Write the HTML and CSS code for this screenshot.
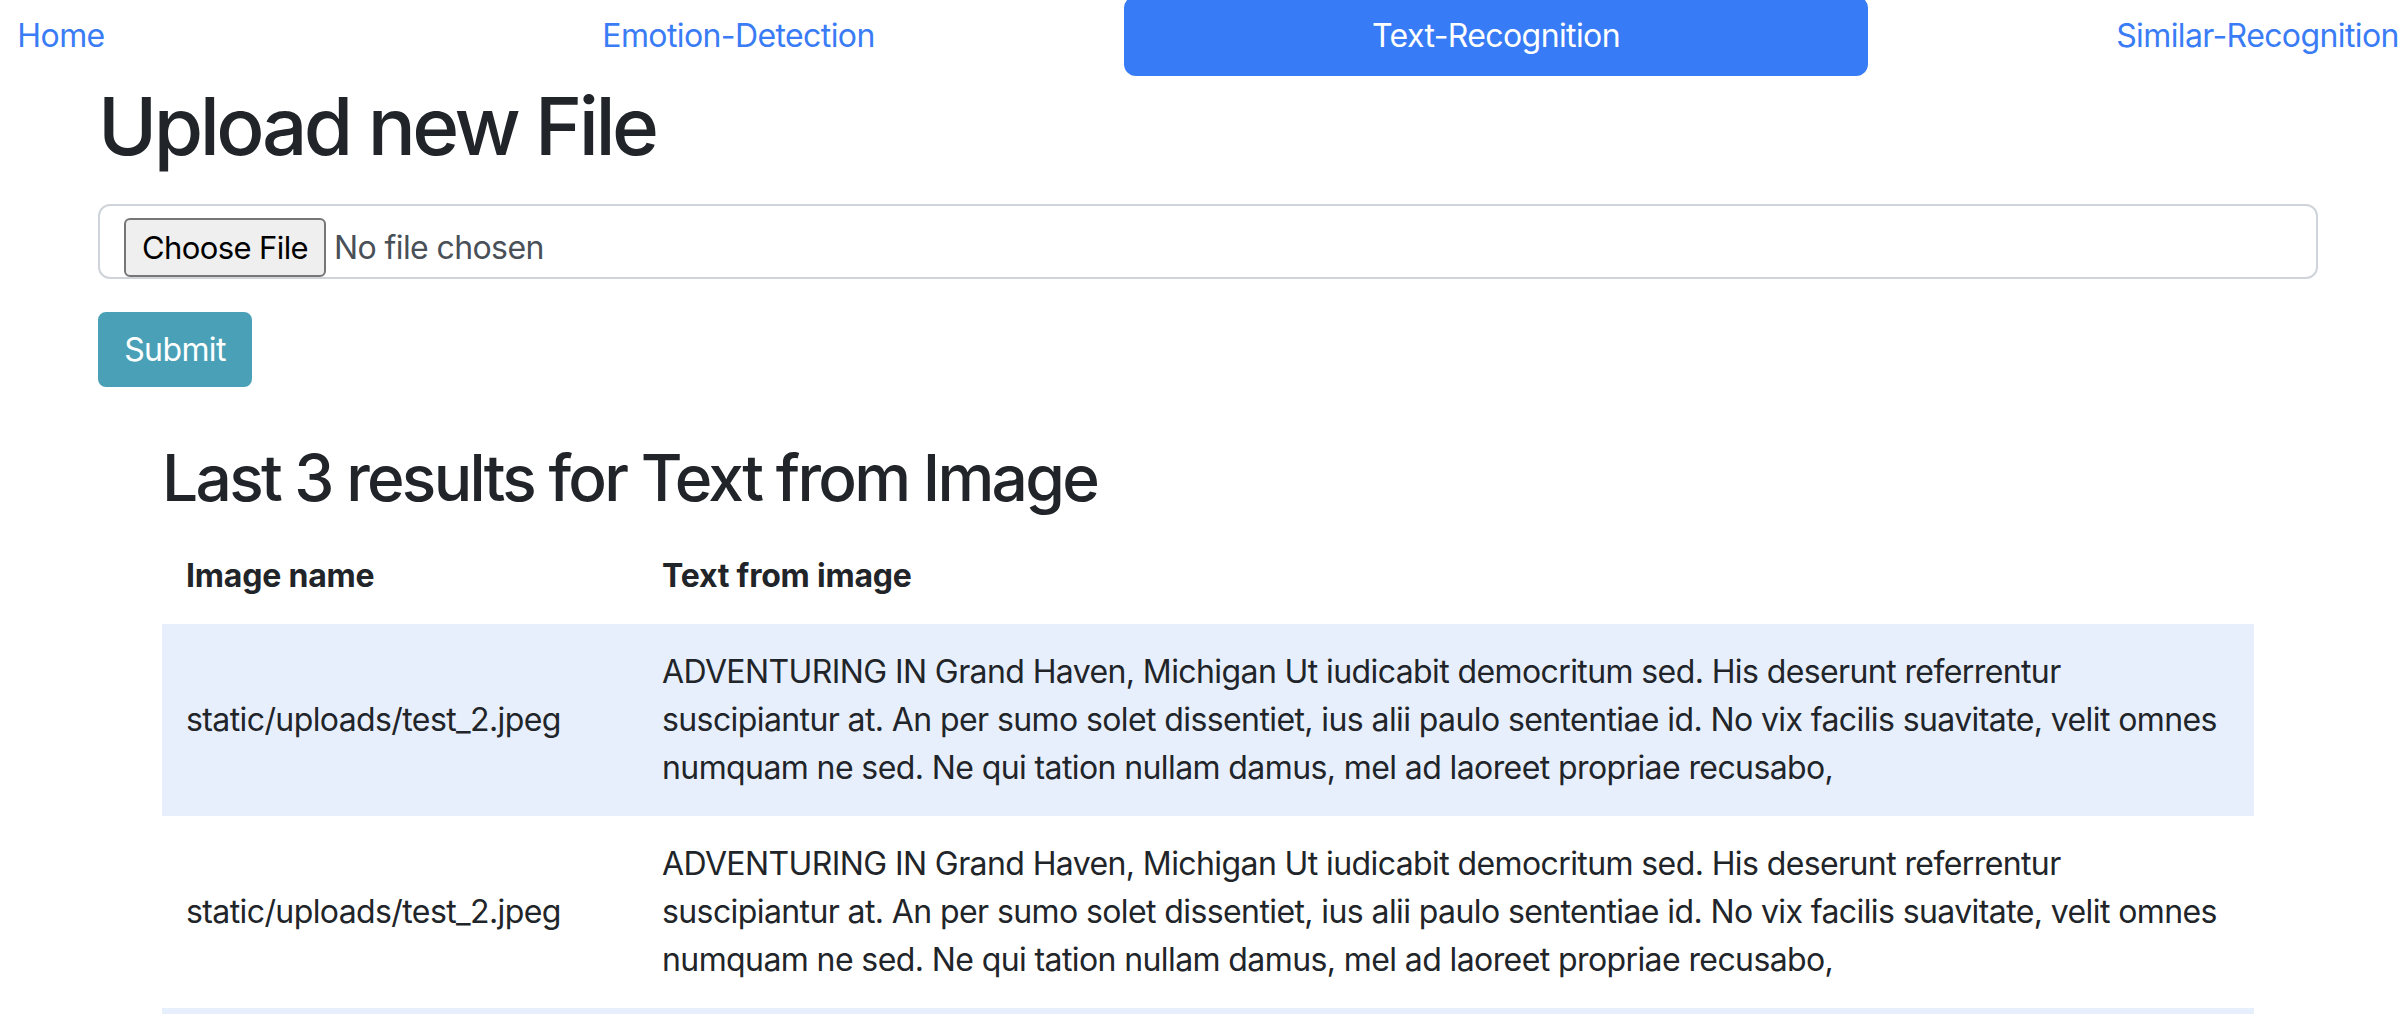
FILE: index.html
```html
<!DOCTYPE html>
<html lang="en">
<head>
<meta charset="utf-8">
<title>Text-Recognition</title>
<link rel="stylesheet" href="styles.css">
</head>
<body>
<div class="page">
  <nav class="nav">
    <a class="nav-link item-home" href="#">Home</a>
    <a class="nav-link item-emotion" href="#">Emotion-Detection</a>
    <a class="nav-link item-text active" href="#">Text-Recognition</a>
    <a class="nav-link item-similar" href="#">Similar-Recognition</a>
  </nav>
  <main class="container">
    <h1 class="title">Upload new File</h1>
    <form class="upload">
      <label class="file-control">
        <span class="file-btn">Choose File</span>
        <span class="file-name">No file chosen</span>
      </label>
      <button type="button" class="btn-submit">Submit</button>
    </form>
    <section class="results">
      <h2 class="results-title">Last 3 results for Text from Image</h2>
      <table class="results-table">
        <thead>
          <tr><th class="col-name">Image name</th><th class="col-text">Text from image</th></tr>
        </thead>
        <tbody>
          <tr class="stripe">
            <td>static/uploads/test_2.jpeg</td>
            <td>ADVENTURING IN Grand Haven, Michigan Ut iudicabit democritum sed. His deserunt referrentur suscipiantur at. An per sumo solet dissentiet, ius alii paulo sententiae id. No vix facilis suavitate, velit omnes numquam ne sed. Ne qui tation nullam damus, mel ad laoreet propriae recusabo,</td>
          </tr>
          <tr>
            <td>static/uploads/test_2.jpeg</td>
            <td>ADVENTURING IN Grand Haven, Michigan Ut iudicabit democritum sed. His deserunt referrentur suscipiantur at. An per sumo solet dissentiet, ius alii paulo sententiae id. No vix facilis suavitate, velit omnes numquam ne sed. Ne qui tation nullam damus, mel ad laoreet propriae recusabo,</td>
          </tr>
          <tr class="stripe">
            <td>static/uploads/test_2.jpeg</td>
            <td>ADVENTURING IN Grand Haven, Michigan Ut iudicabit democritum sed. His deserunt referrentur suscipiantur at. An per sumo solet dissentiet, ius alii paulo sententiae id. No vix facilis suavitate, velit omnes numquam ne sed. Ne qui tation nullam damus, mel ad laoreet propriae recusabo,</td>
          </tr>
        </tbody>
      </table>
    </section>
  </main>
</div>
</body>
</html>
```
FILE: styles.css
```css
html, body {
  margin: 0;
  padding: 0;
  background: #ffffff;
  overflow: hidden;
}

body {
  font-family: "Inter", "Liberation Sans", sans-serif;
  font-size: 32px;
  line-height: 48px;
  letter-spacing: -0.6px;
  color: #212529;
}

.page {
  width: 2416px;
}

/* navigation */
.nav {
  display: flex;
  justify-content: center;
  margin-top: -4px;
  height: 80px;
}

.nav-link {
  flex: 0 0 auto;
  box-sizing: border-box;
  height: 80px;
  padding: 16px 0;
  text-align: center;
  color: #3a7cf5;
  text-decoration: none;
  border-radius: 12px;
  white-space: nowrap;
}

.nav-link.active {
  background: #377bf6;
  color: #ffffff;
}

.item-home { width: 584px; }
.item-emotion { width: 771px; }
.item-text { width: 744px; }
.item-similar { width: 779px; }

/* main */
.container {
  padding: 0 98px;
}

.title {
  margin: 2px 0 30px;
  font-size: 80px;
  line-height: 96px;
  font-weight: 500;
  letter-spacing: -3.5px;
}

.upload {
  margin: 0;
}

.file-control {
  display: flex;
  align-items: flex-start;
  box-sizing: border-box;
  height: 75px;
  padding: 12px 24px;
  border: 2px solid #ced4da;
  border-radius: 12px;
  color: #495057;
}

.file-btn {
  box-sizing: border-box;
  width: 202px;
  height: 59px;
  border: 2px solid #767676;
  border-radius: 6px;
  background: #efefef;
  color: #000000;
  font-size: 31px;
  line-height: 55px;
  text-align: center;
  white-space: nowrap;
}

.file-name {
  margin-left: 8px;
  line-height: 59px;
}

.btn-submit {
  display: block;
  margin-top: 33px;
  box-sizing: border-box;
  width: 154px;
  height: 75px;
  padding: 12px 0;
  border: 2px solid #4aa1b7;
  border-radius: 8px;
  background: #4aa1b7;
  color: #ffffff;
  font-family: inherit;
  font-size: 32px;
  line-height: 48px;
  letter-spacing: -0.6px;
}

/* results */
.results {
  padding: 0 64px;
  margin-top: 52px;
}

.results-title {
  margin: 0 0 12px;
  font-size: 64px;
  line-height: 77px;
  font-weight: 500;
  letter-spacing: -2.7px;
}

.results-table {
  width: 100%;
  border-collapse: collapse;
  table-layout: fixed;
}

.results-table th,
.results-table td {
  padding: 24px;
  text-align: left;
  vertical-align: middle;
}

.results-table th {
  font-weight: 700;
  vertical-align: bottom;
  letter-spacing: -0.2px;
}

.col-name { width: 428px; }

.stripe td {
  background: #e8effc;
}
```
